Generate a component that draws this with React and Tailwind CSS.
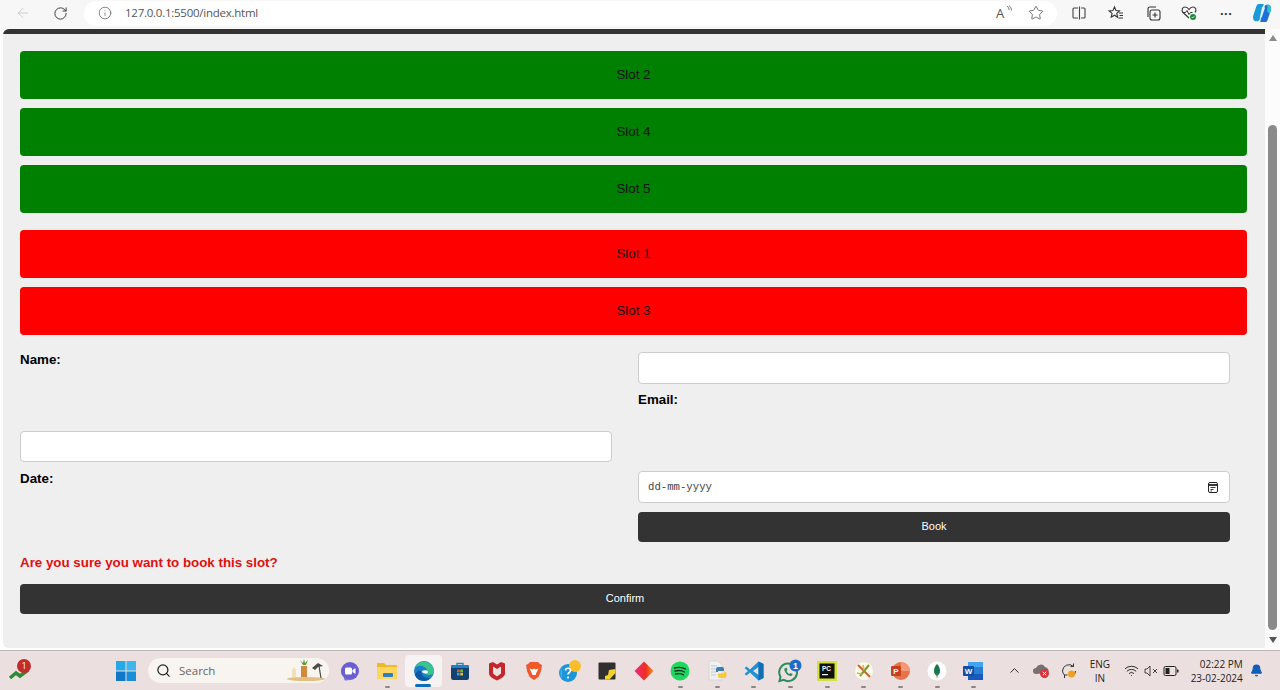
import { ArrowLeft, RotateCw, Info, Star, Search, ChevronUp, Wifi, Bell } from 'lucide-react';

const slotsFree = ['Slot 2', 'Slot 4', 'Slot 5'];
const slotsTaken = ['Slot 1', 'Slot 3'];

const Tool = ({ children, className = '' }) => (
  <span className={`flex items-center justify-center ${className}`}>{children}</span>
);

// toolbar icons
const ReadAloud = () => (
  <span className="relative flex w-[16px] h-[16px] items-center font-['Open_Sans',sans-serif] text-[13px] leading-none text-[#555]">
    A
    <svg width="6" height="8" viewBox="0 0 6 8" fill="none" stroke="#555" strokeWidth="0.8" className="absolute right-0 top-0">
      <path d="M1 1c1.5 1 2 2.5 2 4M3 0.5c1.5 1.2 2.500 3 2.500 5" />
    </svg>
  </span>
);
const SplitIcon = () => (
  <svg width="16" height="16" viewBox="0 0 16 16" fill="none" stroke="#444" strokeWidth="1.100">
    <path d="M7 3H3a1 1 0 0 0-1 1v8a1 1 0 0 0 1 1h4M10 3h3a1 1 0 0 1 1 1v8a1 1 0 0 1-1 1h-3M8.500 1.500v13" />
  </svg>
);
const FavsIcon = () => (
  <svg width="16" height="16" viewBox="0 0 16 16" fill="none" stroke="#333" strokeWidth="1.100">
    <path d="M6.500 2l1.500 3.600 3.500.4-2.700 2.400.8 3.800-3.100-2-3.300 2 .9-3.800L1.200 6l3.700-.4z" />
    <path d="M11 8h4M11.500 10.500h3.500M10.500 13h4.500" />
  </svg>
);
const CollectionsIcon = () => (
  <svg width="16" height="16" viewBox="0 0 16 16" fill="none" stroke="#333" strokeWidth="1.100">
    <rect x="5" y="5" width="10" height="10" rx="2" />
    <path d="M10 7.500v5M7.500 10h5M3 12V4a2 2 0 0 1 2-2h6" />
  </svg>
);
const HeartIcon = () => (
  <svg width="18" height="18" viewBox="0 0 18 18" fill="none">
    <path d="M9 14L3 8.500C1 6 2.500 3 5 3c1.800 0 3 1 4 2.500C10 4 11.300 3 13 3c2.500 0 4 3 2 5.500" stroke="#333" strokeWidth="1.100" />
    <path d="M2.500 8.500h3l1.500-2 2 4 1.500-2h2" stroke="#333" strokeWidth="1" />
    <circle cx="13" cy="13" r="3" fill="#1f8a3b" />
    <path d="M11.600 13l1 1 1.800-1.800" stroke="#fff" strokeWidth="0.800" />
  </svg>
);
const CopilotIcon = () => (
  <svg width="20" height="20" viewBox="0 0 22 22">
    <path d="M7 1h6l-3 13c-.5 2.500-2 6-4 6H4C1.500 20 0.500 16 1.500 13.500L4.500 4.500C5 2.500 6 1 7 1z" fill="#1c9ad6" />
    <path d="M15 21H9l3-13c.5-2.500 2-6 4-6h2c2.500 0 3.500 4 2.500 6.500L17.500 17.500c-.5 2-1.500 3.500-2.500 3.500z" fill="#1f6fd8" />
    <path d="M11 5l2.500-3 .5 4-3 9-2.500 2z" fill="#dff1fb" />
    <path d="M17 2h1c2.500 0 3.500 4 2.500 6.500L19.500 12l-3-3z" fill="#27c3c9" />
  </svg>
);
const CalendarGlyph = () => (
  <svg width="12" height="13" viewBox="0 0 12 13" fill="none" stroke="#222" strokeWidth="1">
    <rect x="1.500" y="1.500" width="9" height="10" rx="1.500" />
    <path d="M1.500 4h9" strokeWidth="1.800" />
    <path d="M3.500 6.500h5M3.500 8.500h3M3.500 10h1.500" strokeWidth="0.900" />
  </svg>
);

// taskbar apps
const Teams = () => (
  <svg width="20" height="20" viewBox="0 0 20 20">
    <circle cx="10" cy="10" r="9" fill="#6a5fd0" />
    <path d="M1 10a9 9 0 0 0 9 9l-5 .5z" fill="#6a5fd0" />
    <rect x="5" y="6.500" width="7" height="7" rx="1.500" fill="#fff" />
    <path d="M12.500 9l3-2v6l-3-2z" fill="#fff" />
  </svg>
);
const Folder = () => (
  <svg width="22" height="20" viewBox="0 0 22 20">
    <path d="M1 2h7l2 2h10a1 1 0 0 1 1 1v12a1 1 0 0 1-1 1H2a1 1 0 0 1-1-1z" fill="#f2b925" />
    <path d="M1 6h20v11a1 1 0 0 1-1 1H2a1 1 0 0 1-1-1z" fill="#fcd660" />
    <rect x="7" y="12" width="10" height="4" rx="1" fill="#2c7fc4" />
  </svg>
);
const Edge = () => (
  <svg width="22" height="22" viewBox="0 0 22 22">
    <circle cx="11" cy="11" r="10" fill="#1b7fc9" />
    <path d="M2 8c2-6 9-8 14-5 3 2 5 5 5 9 0 2-2 3-5 3-3 0-4-1-4-2 2 0 3-1 2-3-1-3-5-5-9-4-1 .2-2 1-3 2z" fill="#39c489" />
    <path d="M8 11c0 4 3 7 7 7 1 0 2 0 3-.5-2 2.500-4 3.500-7 3.500-5 0-8-3-9-6 1-3 3-5 6-4z" fill="#0c5aa6" />
    <path d="M9 11c2-1.500 6-1 6 1 0 1-1.500 1.500-3 1.500-2 0-3-1-3-2.500z" fill="#f7f3f2" />
  </svg>
);
const Store = () => (
  <svg width="20" height="20" viewBox="0 0 20 20">
    <path d="M7 4V2.500h6V4" fill="none" stroke="#2f86c4" strokeWidth="1.400" />
    <rect x="1" y="4" width="18" height="15" rx="2.500" fill="#12426f" />
    <rect x="1" y="4" width="18" height="3" rx="1" fill="#2a7cc0" />
    <rect x="7" y="8.500" width="2.700" height="2.700" fill="#e8562a" />
    <rect x="10.300" y="8.500" width="2.700" height="2.700" fill="#7cbb2f" />
    <rect x="7" y="11.800" width="2.700" height="2.700" fill="#2aa4e8" />
    <rect x="10.300" y="11.800" width="2.700" height="2.700" fill="#f6b91d" />
  </svg>
);
const Mcafee = () => (
  <svg width="18" height="20" viewBox="0 0 18 20">
    <path d="M1 2.500l4-1.500 4 2.500 4-2.500 4 1.500v10c0 3-4 5-8 7-4-2-8-4-8-7z" fill="#c3272b" />
    <path d="M5 5.500l4 2.500 4-2.500v7l-4 3-4-3z" fill="#ebe0df" />
  </svg>
);
const Brave = () => (
  <svg width="18" height="20" viewBox="0 0 18 20">
    <path d="M5 1h8l2 2 2 1-1 6-2.500 6L9 19l-4.500-3L2 10 1 4l2-1z" fill="#f2582b" />
    <path d="M4.500 7.500l3 1 1.500-1 1.500 1 3-1-2 4-1 2.500H9 7.500l-1-2.500z" fill="#fff" />
    <path d="M7.500 14h3L9 16z" fill="#f2582b" />
  </svg>
);
const Helper = () => (
  <svg width="24" height="24" viewBox="0 0 24 24">
    <circle cx="10" cy="14" r="9" fill="#1d95d8" />
    <path d="M4 9a9 9 0 0 0 0 10z" fill="#3fb4ec" />
    <circle cx="17" cy="7" r="6" fill="#f9bd2c" />
    <path d="M7.500 11.500c0-3 5-3 5 0 0 2-2.500 2-2.500 4" fill="none" stroke="#fff" strokeWidth="1.700" />
    <circle cx="10" cy="18.500" r="1.100" fill="#fff" />
  </svg>
);
const Sticky = () => (
  <svg width="18" height="18" viewBox="0 0 18 18">
    <rect x="0.500" y="0.500" width="17" height="17" rx="1" fill="#2f2f2f" />
    <path d="M7 17.500V14l3-1 1-5 6.500-1v4l-6 6.500z" fill="#f5cf2c" />
  </svg>
);
const Diamond = () => (
  <svg width="20" height="20" viewBox="0 0 20 20">
    <defs>
      <linearGradient id="dia" x1="0" y1="0" x2="1" y2="0">
        <stop offset="0" stopColor="#ee2a7b" />
        <stop offset="0.600" stopColor="#f02d22" />
        <stop offset="1" stopColor="#f7941d" />
      </linearGradient>
    </defs>
    <path d="M10 0.500L19.500 10 10 19.500 0.500 10z" fill="url(#dia)" />
  </svg>
);
const Spotify = () => (
  <svg width="20" height="20" viewBox="0 0 20 20" fill="none">
    <circle cx="10" cy="10" r="9.500" fill="#1ed760" />
    <path d="M4.500 7c4-1 8-.7 11 1M5 10c3.500-.8 7-.5 9.500 1M5.500 13c3-.6 6-.4 8 .8" stroke="#14361f" strokeWidth="1.400" strokeLinecap="round" />
  </svg>
);
const PyFile = () => (
  <svg width="20" height="22" viewBox="0 0 20 22">
    <path d="M2 1h9l4 4v15H2z" fill="#eef0f2" stroke="#c9cdd2" strokeWidth="0.600" />
    <path d="M4 6h6M4 9h5M4 12h5M4 15h5" stroke="#b6bcc4" strokeWidth="0.800" />
    <path d="M11 7h4a2 2 0 0 1 2 2v2h-6v1H9V9a2 2 0 0 1 2-2z" fill="#3d7db0" />
    <path d="M17 11.500h1a1.500 1.500 0 0 1 1.500 1.500v3a2 2 0 0 1-2 2H13a2 2 0 0 1-2-2v-2.500h6z" fill="#f5c93a" />
  </svg>
);
const VsCode = () => (
  <svg width="20" height="20" viewBox="0 0 20 20">
    <path d="M14.500 0.500L19.500 3v14l-5 2.500L6 11.500l-3.500 3L0.500 13 4 10 .5 7l2-1.500L6 8.500z" fill="#1f8fd6" />
    <path d="M14.500 6L9 10l5.500 4z" fill="#ebe0df" />
    <path d="M14.500 0.500L19.500 3v14l-5 2.500z" fill="#0f6fb5" />
  </svg>
);
const WhatsApp = () => (
  <svg width="26" height="24" viewBox="0 0 26 24">
    <path d="M11 4.500a8.800 8.800 0 0 0-7.500 13.300L2.500 22l4.300-1.100A8.800 8.800 0 1 0 11 4.500z" fill="#ebe0df" stroke="#2d8a5b" strokeWidth="2" />
    <path d="M7.500 9.500c-1 2 2 7 6 7.500 1.500 0 2-1 2-2l-2-1-1 1c-1.500-.5-2.500-2-3-3l1-1-1-2.500z" fill="#2d8a5b" />
    <circle cx="18.500" cy="6.500" r="6" fill="#1a6ec9" />
    <text x="18.500" y="9.800" textAnchor="middle" fontSize="9" fontWeight="700" fill="#fff" fontFamily="Liberation Sans">1</text>
  </svg>
);
const PyCharm = () => (
  <svg width="20" height="20" viewBox="0 0 20 20">
    <rect x="0" y="0" width="20" height="20" fill="#d5e03c" />
    <rect x="2.500" y="2.500" width="15" height="15" fill="#0c130c" />
    <text x="5" y="10" fontSize="6.500" fontWeight="700" fill="#fff" fontFamily="Liberation Sans">PC</text>
    <rect x="5" y="13" width="6" height="1.200" fill="#fff" />
  </svg>
);
const Tools = () => (
  <svg width="20" height="20" viewBox="0 0 20 20" fill="none">
    <circle cx="10" cy="10" r="9.500" fill="#fbf8ee" stroke="#d8d2c4" strokeWidth="0.500" />
    <path d="M4 4l12 12" stroke="#c2662d" strokeWidth="2" />
    <path d="M15 4L6 15" stroke="#7a9a2e" strokeWidth="2" />
    <path d="M3 12l5 1M9 4l1 5" stroke="#e3b23a" strokeWidth="1.600" />
  </svg>
);
const PowerPoint = () => (
  <svg width="20" height="20" viewBox="0 0 20 20">
    <circle cx="11" cy="10" r="9" fill="#e8734a" />
    <path d="M11 1a9 9 0 0 1 9 9h-9z" fill="#f29a76" />
    <rect x="1" y="5" width="10" height="10" rx="1.200" fill="#c4401f" />
    <text x="6" y="13" textAnchor="middle" fontSize="8" fontWeight="700" fill="#fff" fontFamily="Liberation Sans">P</text>
  </svg>
);
const Mongo = () => (
  <svg width="20" height="20" viewBox="0 0 20 20">
    <circle cx="10" cy="10" r="9.500" fill="#ffffff" />
    <path d="M10 3c2.500 2.500 3 5 3 7 0 2.500-1.500 4-3 5-1.500-1-3-2.500-3-5 0-2 .5-4.500 3-7z" fill="#14784a" />
    <path d="M10 12v5" stroke="#8b7a58" strokeWidth="0.800" />
  </svg>
);
const Word = () => (
  <svg width="22" height="20" viewBox="0 0 22 20">
    <rect x="6" y="1" width="15" height="18" rx="1" fill="#2b7cd3" />
    <rect x="6" y="1" width="15" height="5" fill="#41a5ee" />
    <rect x="6" y="13" width="15" height="6" fill="#185abd" />
    <rect x="1" y="5" width="11" height="10" rx="1" fill="#124ea6" />
    <text x="6.500" y="13" textAnchor="middle" fontSize="8" fontWeight="700" fill="#fff" fontFamily="Liberation Sans">W</text>
  </svg>
);

const apps = [
  { icon: Teams },
  { icon: Folder, running: true },
  { icon: Edge, active: true },
  { icon: Store },
  { icon: Mcafee },
  { icon: Brave },
  { icon: Helper },
  { icon: Sticky },
  { icon: Diamond },
  { icon: Spotify, running: true },
  { icon: PyFile, running: true },
  { icon: VsCode, running: true },
  { icon: WhatsApp, running: true },
  { icon: PyCharm, running: true },
  { icon: Tools, running: true },
  { icon: PowerPoint, running: true },
  { icon: Mongo, running: true },
  { icon: Word, running: true },
];

function Toolbar() {
  return (
    <header className="h-[29px] bg-[#f7f7f7] flex items-center shrink-0 pb-[3px]">
      <ArrowLeft className="w-[16px] h-[16px] ml-[15px] text-[#c4c4c4]" strokeWidth={1.2} />
      <RotateCw className="w-[15px] h-[15px] ml-[22px] text-[#333]" strokeWidth={1.500} />
      <div className="ml-[16px] w-[973px] h-[25px] bg-white rounded-full flex items-center">
        <Info className="w-[14px] h-[14px] ml-[14px] text-[#555]" strokeWidth={1.200} />
        <span className="ml-[13px] text-[11.5px] text-[#555] font-['Open_Sans',sans-serif] tracking-[-0.25px]">127.0.0.1:5500/index.html</span>
        <span className="ml-auto flex items-center">
          <ReadAloud />
          <Star className="w-[16px] h-[16px] ml-[16px] mr-[13px] text-[#444]" strokeWidth={1.100} />
        </span>
      </div>
      <Tool className="ml-[14px]"><SplitIcon /></Tool>
      <Tool className="ml-[21px]"><FavsIcon /></Tool>
      <Tool className="ml-[21px]"><CollectionsIcon /></Tool>
      <Tool className="ml-[19px]"><HeartIcon /></Tool>
      <span className="ml-[22px] text-[#333] text-[13px] font-bold leading-none tracking-[0.5px] font-['Liberation_Sans',sans-serif] mb-[6px]">...</span>
      <Tool className="ml-[20px]"><CopilotIcon /></Tool>
    </header>
  );
}

function Scrollbar() {
  return (
    <div className="w-[15px] bg-[#fcfcfc] flex flex-col items-center shrink-0 pt-[6px] pb-[7px]">
      <span className="w-0 h-0 border-x-[4px] border-x-transparent border-b-[6px] border-b-[#8a8a8a]" />
      <div className="w-[9px] mt-[84px] flex-1 bg-[#8a8a8a] rounded-full" />
      <span className="mt-[7px] w-0 h-0 border-x-[4px] border-x-transparent border-t-[6px] border-t-[#555]" />
    </div>
  );
}

function Slot({ label, color }) {
  return (
    <button className={`w-full h-[48px] rounded-[4px] text-[13.33px] text-[#111] font-['Liberation_Sans',sans-serif] ${color}`}>
      {label}
    </button>
  );
}

function BookingForm() {
  const input = 'w-full h-full bg-white border border-[#ccc] rounded-[4px]';
  const label = "text-[13.33px] leading-[15px] font-bold text-black font-['Liberation_Sans',sans-serif]";
  return (
    <form className="mt-[17px] mr-[17px] grid grid-cols-[592px_592px] justify-between grid-rows-[32px_31px_32px_33px_30px] gap-y-[8px]">
      <label className={label}>Name:</label>
      <input className={input} />
      <label className={`${label} col-start-2`}>Email:</label>
      <input className={`${input} col-start-1 !h-[31px]`} />
      <label className={`${label} col-start-1`}>Date:</label>
      <div className={`${input} !h-[32px] flex items-center justify-between pl-[9px] pr-[10px]`}>
        <span className="text-[10.67px] text-[#444] font-['Liberation_Mono',monospace]">dd-mm-yyyy</span>
        <CalendarGlyph />
      </div>
      <button type="button" className="col-start-2 bg-[#333] text-white rounded-[4px] text-[11px] pb-[1px] font-['Liberation_Sans',sans-serif]">
        Book
      </button>
    </form>
  );
}

function Taskbar() {
  return (
    <footer className="h-[40px] shrink-0 bg-[#ebe0df] border-t border-[#bdb7b6] flex items-center font-['Open_Sans',sans-serif] text-[#222]">
      <div className="relative w-[36px] h-[24px] ml-[2px]">
        <svg width="24" height="16" viewBox="0 0 24 16" className="absolute left-[6px] top-[7px]">
          <path d="M2 12l6-5 4 3 8-6" fill="none" stroke="#2f8a35" strokeWidth="3.500" />
        </svg>
        <span className="absolute left-[15px] top-0 w-[14px] h-[14px] rounded-full bg-[#c42b2b] text-white text-[9px] leading-[14px] text-center">1</span>
      </div>
      {/* windows logo */}
      <svg width="20" height="20" viewBox="0 0 20 20" className="ml-[78px]">
        <rect x="0" y="0" width="9.500" height="9.500" fill="#29a8e8" />
        <rect x="10.500" y="0" width="9.500" height="9.500" fill="#3fb6ee" />
        <rect x="0" y="10.500" width="9.500" height="9.500" fill="#0f78c8" />
        <rect x="10.500" y="10.500" width="9.500" height="9.500" fill="#1a8ed8" />
      </svg>
      <div className="relative ml-[12px] w-[181px] h-[25px] rounded-full bg-[#f8f4ef] flex items-center">
        <Search className="w-[15px] h-[15px] ml-[8px] text-[#222]" strokeWidth={2} />
        <span className="ml-[8px] text-[11.5px] text-[#666]">Search</span>
        <svg width="42" height="24" viewBox="0 0 42 24" className="absolute right-[1px] top-0">
          <ellipse cx="20" cy="21" rx="19" ry="2" fill="#e3bf85" />
          <path d="M17 7l-3-5 3 3 1-4 1 4 3-3-2 5z" fill="#5f9a3a" />
          <rect x="15" y="8" width="6" height="11" fill="#cf8a3c" />
          <path d="M6 19v-7l2-3 2 3v7z" fill="#f3dfb4" />
          <path d="M26 10l6-5 5 3-5 1-3 3z" fill="#4a4a48" />
          <path d="M33 8l2 12" stroke="#4a4a48" strokeWidth="1.200" />
        </svg>
      </div>
      <div className="flex ml-[3px]">
        {apps.map(({ icon: Icon, running, active }, i) => (
          <div
            key={i}
            className={`relative w-[36.67px] h-[32px] rounded-[4px] flex items-center justify-center ${active ? 'bg-[#f7f3f2]' : ''}`}
          >
            <Icon />
            {running && <span className="absolute bottom-[-1px] left-[16px] w-[5px] h-[2px] rounded-full bg-[#8b8684]" />}
            {active && <span className="absolute bottom-0 left-[10px] w-[16px] h-[3px] rounded-full bg-[#0f6cbd]" />}
          </div>
        ))}
      </div>
      <ChevronUp className="w-[15px] h-[15px] ml-[15px] text-[#222]" strokeWidth={1.500} />
      <svg width="18" height="16" viewBox="0 0 18 16" className="ml-[11px]">
        <path d="M3 11a3 3 0 0 1 0-6 5 5 0 0 1 9-1 4 4 0 0 1 3 6" fill="#77706e" />
        <circle cx="11.500" cy="10.500" r="4.500" fill="#d8343a" />
        <path d="M9.800 8.800l3.400 3.400M13.200 8.800l-3.400 3.400" stroke="#fff" strokeWidth="1" />
      </svg>
      <svg width="18" height="18" viewBox="0 0 18 18" fill="none" className="ml-[9px]">
        <path d="M2.500 9a6.500 6.500 0 0 1 11-4.500M15.500 9a6.500 6.500 0 0 1-2 4.500M13.500 1.500v3h-3M4.500 16v-3h3" stroke="#333" strokeWidth="1" />
        <path d="M2.500 9a6.500 6.500 0 0 0 2 4" stroke="#333" strokeWidth="1" />
        <circle cx="11.500" cy="12" r="3.500" fill="#f0a020" />
      </svg>
      <div className="ml-[10px] w-[24px] flex flex-col items-center text-[10px] leading-[14px]">
        <span>ENG</span>
        <span>IN</span>
      </div>
      <Wifi className="w-[15px] h-[15px] ml-[12px] text-[#222]" strokeWidth={1.500} />
      <svg width="14" height="14" viewBox="0 0 14 14" fill="none" stroke="#333" strokeWidth="0.900" className="ml-[5px]">
        <path d="M1 5v4h2l3 3V2L3 5zM9 5l4 4M13 5l-4 4" />
      </svg>
      <svg width="16" height="12" viewBox="0 0 16 12" fill="none" className="ml-[5px]">
        <rect x="1" y="1.500" width="12" height="9" rx="1.500" stroke="#222" strokeWidth="1" />
        <rect x="2.500" y="3" width="4" height="6" fill="#222" />
        <rect x="14" y="4.500" width="1.500" height="3" fill="#222" />
      </svg>
      <div className="ml-[12px] w-[52px] flex flex-col items-end text-[10px] leading-[14px] whitespace-nowrap">
        <span>02:22 PM</span>
        <span>23-02-2024</span>
      </div>
      <Bell className="w-[13px] h-[13px] ml-[7px] text-[#0f5fb8] fill-[#0f5fb8]" />
    </footer>
  );
}

export default function App() {
  return (
    <div className="w-[1280px] h-[690px] overflow-hidden flex flex-col bg-white">
      <Toolbar />
      <div className="flex-1 flex min-h-0">
        <main className="flex-1 ml-[3px] mb-[2px] bg-[#efefef] rounded-tl-[6px] rounded-bl-[6px] overflow-hidden">
          <div className="h-[5px] bg-[#333]" />
          <div className="pl-[17px] pr-[18px] pt-[17px]">
            <div className="flex flex-col gap-[9px]">
              {slotsFree.map((s) => <Slot key={s} label={s} color="bg-[#008000]" />)}
            </div>
            <div className="flex flex-col gap-[9px] mt-[17px]">
              {slotsTaken.map((s) => <Slot key={s} label={s} color="bg-[#ff0000]" />)}
            </div>
            <BookingForm />
            <p className="mt-[13px] text-[13.33px] leading-[16px] font-bold text-[#e01010] font-['Liberation_Sans',sans-serif]">
              Are you sure you want to book this slot?
            </p>
            <button className="mt-[13px] mr-[17px] block w-[1210px] h-[30px] pb-[1px] bg-[#333] text-white rounded-[4px] text-[11px] font-['Liberation_Sans',sans-serif]">
              Confirm
            </button>
          </div>
        </main>
        <Scrollbar />
      </div>
      <Taskbar />
    </div>
  );
}
